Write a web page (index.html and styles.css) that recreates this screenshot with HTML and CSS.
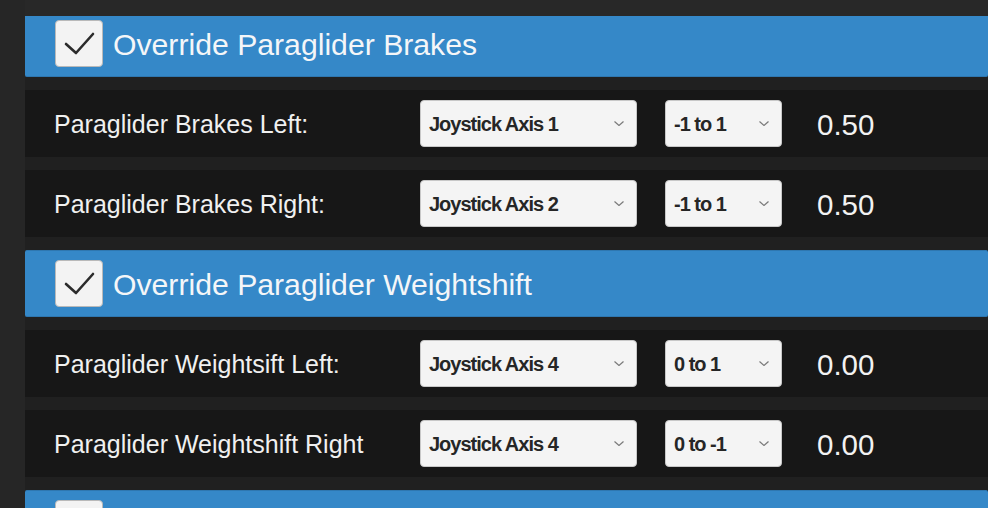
FILE: index.html
```html
<!DOCTYPE html>
<html>
<head>
<meta charset="utf-8">
<link rel="stylesheet" href="styles.css">
</head>
<body>
<div class="app">
  <div class="side"></div>
  <div class="viewport">
    <div class="list">
      <div class="section-head first">
        <div class="checkbox"><svg viewBox="0 0 48 47" width="48" height="47"><path d="M11 24 L21 33 L38 14" fill="none" stroke="#2b2b2b" stroke-width="2.6" stroke-linecap="round" stroke-linejoin="round"/></svg></div>
        <span class="title">Override Paraglider Brakes</span>
      </div>
      <div class="row">
        <span class="label">Paraglider Brakes Left:</span>
        <div class="select wide"><span>Joystick Axis 1</span><svg class="chev" viewBox="0 0 10 5" width="10" height="5"><path d="M0.5 0.5 L5 4.5 L9.5 0.5" fill="none" stroke="#7a7a7a" stroke-width="1.2"/></svg></div>
        <div class="select narrow"><span>-1 to 1</span><svg class="chev" viewBox="0 0 10 5" width="10" height="5"><path d="M0.5 0.5 L5 4.5 L9.5 0.5" fill="none" stroke="#7a7a7a" stroke-width="1.2"/></svg></div>
        <span class="value">0.50</span>
      </div>
      <div class="row">
        <span class="label">Paraglider Brakes Right:</span>
        <div class="select wide"><span>Joystick Axis 2</span><svg class="chev" viewBox="0 0 10 5" width="10" height="5"><path d="M0.5 0.5 L5 4.5 L9.5 0.5" fill="none" stroke="#7a7a7a" stroke-width="1.2"/></svg></div>
        <div class="select narrow"><span>-1 to 1</span><svg class="chev" viewBox="0 0 10 5" width="10" height="5"><path d="M0.5 0.5 L5 4.5 L9.5 0.5" fill="none" stroke="#7a7a7a" stroke-width="1.2"/></svg></div>
        <span class="value">0.50</span>
      </div>
      <div class="section-head">
        <div class="checkbox"><svg viewBox="0 0 48 47" width="48" height="47"><path d="M11 24 L21 33 L38 14" fill="none" stroke="#2b2b2b" stroke-width="2.6" stroke-linecap="round" stroke-linejoin="round"/></svg></div>
        <span class="title">Override Paraglider Weightshift</span>
      </div>
      <div class="row">
        <span class="label">Paraglider Weightsift Left:</span>
        <div class="select wide"><span>Joystick Axis 4</span><svg class="chev" viewBox="0 0 10 5" width="10" height="5"><path d="M0.5 0.5 L5 4.5 L9.5 0.5" fill="none" stroke="#7a7a7a" stroke-width="1.2"/></svg></div>
        <div class="select narrow"><span>0 to 1</span><svg class="chev" viewBox="0 0 10 5" width="10" height="5"><path d="M0.5 0.5 L5 4.5 L9.5 0.5" fill="none" stroke="#7a7a7a" stroke-width="1.2"/></svg></div>
        <span class="value">0.00</span>
      </div>
      <div class="row">
        <span class="label">Paraglider Weightshift Right</span>
        <div class="select wide"><span>Joystick Axis 4</span><svg class="chev" viewBox="0 0 10 5" width="10" height="5"><path d="M0.5 0.5 L5 4.5 L9.5 0.5" fill="none" stroke="#7a7a7a" stroke-width="1.2"/></svg></div>
        <div class="select narrow"><span>0 to -1</span><svg class="chev" viewBox="0 0 10 5" width="10" height="5"><path d="M0.5 0.5 L5 4.5 L9.5 0.5" fill="none" stroke="#7a7a7a" stroke-width="1.2"/></svg></div>
        <span class="value">0.00</span>
      </div>
      <div class="section-head">
        <div class="checkbox"><svg viewBox="0 0 48 47" width="48" height="47"><path d="M11 24 L21 33 L38 14" fill="none" stroke="#2b2b2b" stroke-width="2.6" stroke-linecap="round" stroke-linejoin="round"/></svg></div>
      </div>
    </div>
  </div>
</div>
</body>
</html>
```

FILE: styles.css
```css
* { box-sizing: border-box; }
html, body {
  margin: 0;
  padding: 0;
  background: #282828;
  font-family: "Liberation Sans", Arial, sans-serif;
  overflow: hidden;
}
.app {
  display: flex;
  width: 988px;
  height: 508px;
}
.side {
  width: 25px;
  flex: none;
  background: #262626;
}
.viewport {
  flex: 1;
  margin-top: 16px;
  overflow: hidden;
  background: #202020;
}
.list {
  display: flex;
  flex-direction: column;
  gap: 13px;
  margin-top: -6px;
}
.section-head {
  height: 67px;
  flex: none;
  background: #3588c8;
  border-top: 1px solid #2e77b0;
  border-bottom: 1px solid #2e77b0;
  border-radius: 2px;
  display: flex;
  align-items: center;
  padding-left: 30px;
}
.checkbox {
  width: 48px;
  height: 47px;
  flex: none;
  background: #f3f3f3;
  border: 1px solid #b9b9b9;
  border-radius: 4px;
  position: relative;
}
.checkbox svg {
  position: absolute;
  left: -1px;
  top: -1px;
}
.title {
  margin-left: 10px;
  padding-top: 3px;
  color: #f4f6f8;
  font-size: 30.2px;
  line-height: 1;
}
.row {
  height: 67px;
  flex: none;
  background: #171717;
  display: flex;
  align-items: center;
  padding-left: 29px;
}
.label {
  width: 366px;
  flex: none;
  padding-top: 2px;
  color: #f0f0f0;
  font-size: 25px;
}
.select {
  height: 47px;
  flex: none;
  background: #f4f4f4;
  border: 1px solid #c8c8c8;
  border-radius: 4px;
  display: flex;
  align-items: center;
  justify-content: space-between;
  padding: 2px 12px 0 8px;
  color: #262626;
  font-weight: bold;
  font-size: 20px;
  letter-spacing: -1px;
}
.select.wide { width: 217px; }
.select.narrow { width: 117px; margin-left: 28px; }
.chev { flex: none; margin-top: -2px; }
.value {
  margin-left: 35px;
  padding-top: 2px;
  color: #f2f2f2;
  font-size: 29.5px;
}
```
